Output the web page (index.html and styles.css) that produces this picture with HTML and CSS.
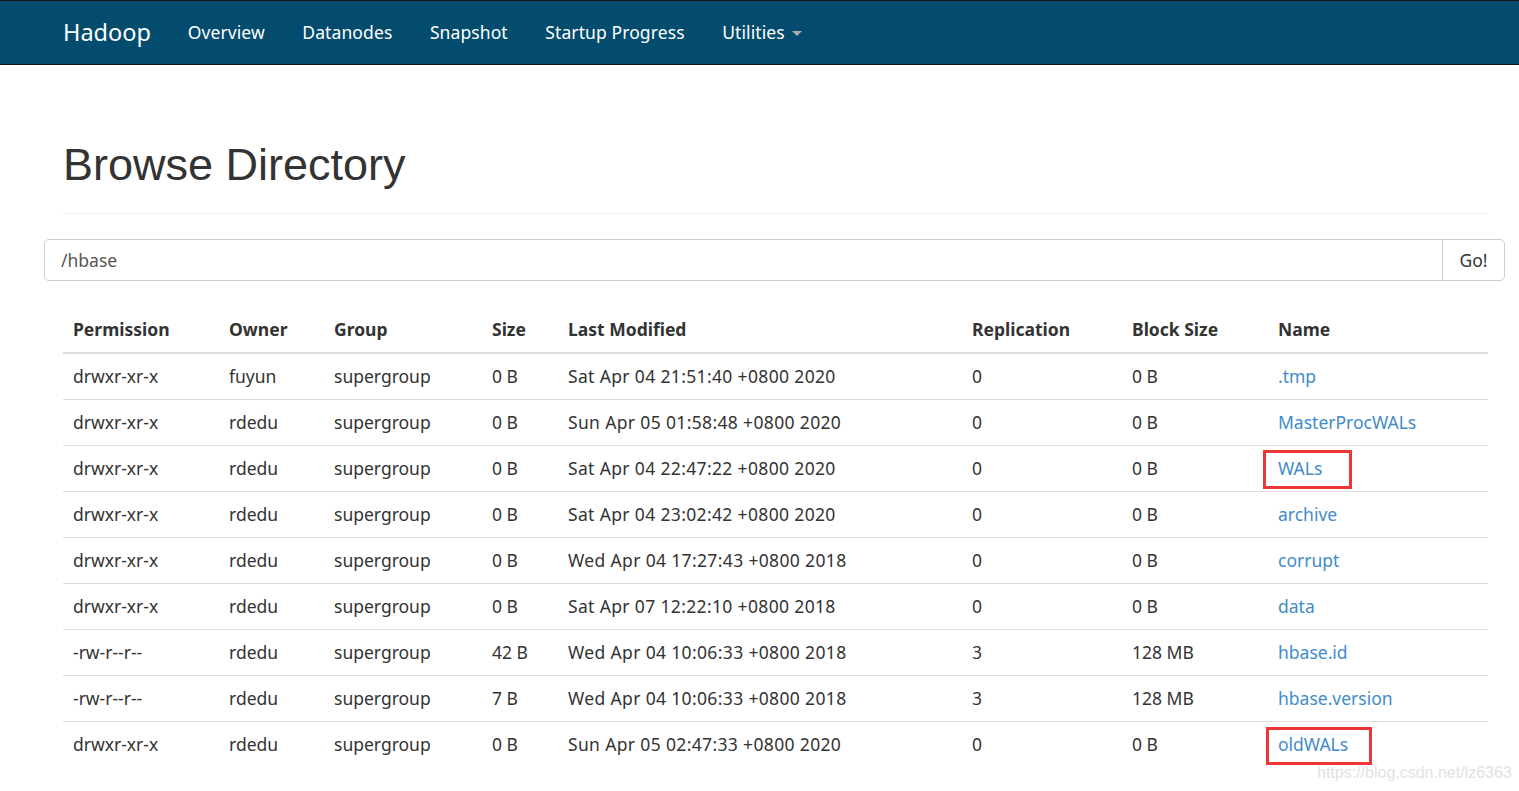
FILE: index.html
```html
<!DOCTYPE html>
<html>
<head>
<meta charset="utf-8">
<link rel="stylesheet" href="styles.css">
</head>
<body>
<header class="navbar">
  <div class="nav-inner">
    <a class="brand">Hadoop</a>
    <nav class="nav-links">
      <a>Overview</a>
      <a>Datanodes</a>
      <a>Snapshot</a>
      <a>Startup Progress</a>
      <a>Utilities <span class="caret"></span></a>
    </nav>
  </div>
</header>
<main class="container">
  <div class="page-header">
    <h1>Browse Directory</h1>
  </div>
  <div class="input-group">
    <div class="input">/hbase</div>
    <div class="go">Go!</div>
  </div>
  <table class="listing">
    <colgroup>
      <col class="c-perm"><col class="c-owner"><col class="c-group"><col class="c-size">
      <col class="c-mod"><col class="c-rep"><col class="c-block"><col class="c-name">
    </colgroup>
    <thead>
      <tr><th>Permission</th><th>Owner</th><th>Group</th><th>Size</th><th>Last Modified</th><th>Replication</th><th>Block Size</th><th>Name</th></tr>
    </thead>
    <tbody>
      <tr><td>drwxr-xr-x</td><td>fuyun</td><td>supergroup</td><td>0 B</td><td class="date">Sat Apr 04 21:51:40 +0800 2020</td><td>0</td><td>0 B</td><td><a>.tmp</a></td></tr>
      <tr><td>drwxr-xr-x</td><td>rdedu</td><td>supergroup</td><td>0 B</td><td class="date">Sun Apr 05 01:58:48 +0800 2020</td><td>0</td><td>0 B</td><td><a>MasterProcWALs</a></td></tr>
      <tr><td>drwxr-xr-x</td><td>rdedu</td><td>supergroup</td><td>0 B</td><td class="date">Sat Apr 04 22:47:22 +0800 2020</td><td>0</td><td>0 B</td><td><a class="marked m1">WALs</a></td></tr>
      <tr><td>drwxr-xr-x</td><td>rdedu</td><td>supergroup</td><td>0 B</td><td class="date">Sat Apr 04 23:02:42 +0800 2020</td><td>0</td><td>0 B</td><td><a>archive</a></td></tr>
      <tr><td>drwxr-xr-x</td><td>rdedu</td><td>supergroup</td><td>0 B</td><td class="date">Wed Apr 04 17:27:43 +0800 2018</td><td>0</td><td>0 B</td><td><a>corrupt</a></td></tr>
      <tr><td>drwxr-xr-x</td><td>rdedu</td><td>supergroup</td><td>0 B</td><td class="date">Sat Apr 07 12:22:10 +0800 2018</td><td>0</td><td>0 B</td><td><a>data</a></td></tr>
      <tr><td>-rw-r--r--</td><td>rdedu</td><td>supergroup</td><td>42 B</td><td class="date">Wed Apr 04 10:06:33 +0800 2018</td><td>3</td><td>128 MB</td><td><a>hbase.id</a></td></tr>
      <tr><td>-rw-r--r--</td><td>rdedu</td><td>supergroup</td><td>7 B</td><td class="date">Wed Apr 04 10:06:33 +0800 2018</td><td>3</td><td>128 MB</td><td><a>hbase.version</a></td></tr>
      <tr><td>drwxr-xr-x</td><td>rdedu</td><td>supergroup</td><td>0 B</td><td class="date">Sun Apr 05 02:47:33 +0800 2020</td><td>0</td><td>0 B</td><td><a class="marked m2">oldWALs</a></td></tr>
    </tbody>
  </table>
</main>
<div class="watermark">https://blog.csdn.net/lz6363</div>
</body>
</html>
```
FILE: styles.css
```css
html, body {
  margin: 0;
  padding: 0;
  background: #fff;
}
body {
  font-family: "Noto Sans", "Open Sans", sans-serif;
  font-size: 17.5px;
  color: #333;
  width: 1519px;
  height: 791px;
  overflow: hidden;
  position: relative;
}
.navbar {
  height: 63px;
  background: #034c6d;
  border-top: 1px solid #111;
  border-bottom: 1px solid #111;
}
.nav-inner {
  display: flex;
  align-items: center;
  height: 100%;
  padding-left: 63px;
  margin-top: -1px;
}
.brand {
  color: #fff;
  font-size: 23.5px;
  margin-right: 18px;
}
.nav-links {
  display: flex;
  align-items: center;
}
.nav-links a {
  color: #fff;
  padding: 0 18.75px;
  letter-spacing: 0.1px;
}
.caret {
  display: inline-block;
  width: 0;
  height: 0;
  border-left: 5px solid transparent;
  border-right: 5px solid transparent;
  border-top: 5px solid #aaa;
  vertical-align: middle;
  margin-left: 3px;
}
.container {
  margin-left: 63px;
  width: 1425px;
}
.page-header {
  margin-top: 75px;
  padding-bottom: 23px;
  border-bottom: 1px solid #eee;
}
h1 {
  margin: 0;
  font-family: "Liberation Sans", Arial, sans-serif;
  font-weight: normal;
  font-size: 45px;
  line-height: 49.5px;
  color: #333;
}
.input-group {
  display: flex;
  margin: 25px -17px 0 -19px;
  height: 42px;
  border: 1px solid #ccc;
  border-radius: 5px;
  box-sizing: border-box;
}
.input {
  flex: 1;
  padding-left: 16px;
  display: flex;
  align-items: center;
  color: #555;
}
.go {
  width: 61px;
  border-left: 1px solid #ccc;
  display: flex;
  align-items: center;
  justify-content: center;
  color: #333;
}
.listing {
  margin-top: 26px;
  width: 1425px;
  border-collapse: collapse;
  table-layout: fixed;
}
.c-perm { width: 156px; }
.c-owner { width: 105px; }
.c-group { width: 158px; }
.c-size { width: 76px; }
.c-mod { width: 404px; }
.c-rep { width: 160px; }
.c-block { width: 146px; }
.c-name { width: 220px; }
.listing th, .listing td {
  text-align: left;
  padding: 10px;
  line-height: 25px;
  white-space: nowrap;
}
.listing th {
  font-weight: bold;
  border-bottom: 2px solid #ddd;
}
.listing td {
  border-bottom: 1px solid #ddd;
}
.listing tbody tr:last-child td {
  border-bottom: none;
}
.listing td.date {
  letter-spacing: 0.35px;
}
.listing a {
  color: #428bca;
}
.marked {
  position: relative;
}
.marked::after {
  content: "";
  position: absolute;
  border: 3px solid #ee3636;
}
.m1::after {
  left: -15px;
  top: -6px;
  width: 83px;
  height: 33px;
}
.m2::after {
  left: -12px;
  top: -5px;
  width: 100px;
  height: 32px;
}
.watermark {
  position: absolute;
  left: 1317px;
  top: 764px;
  font-family: "Liberation Sans", Arial, sans-serif;
  font-size: 16px;
  color: #e2e2e2;
  text-shadow: 0 0 1px #fff;
}
```
